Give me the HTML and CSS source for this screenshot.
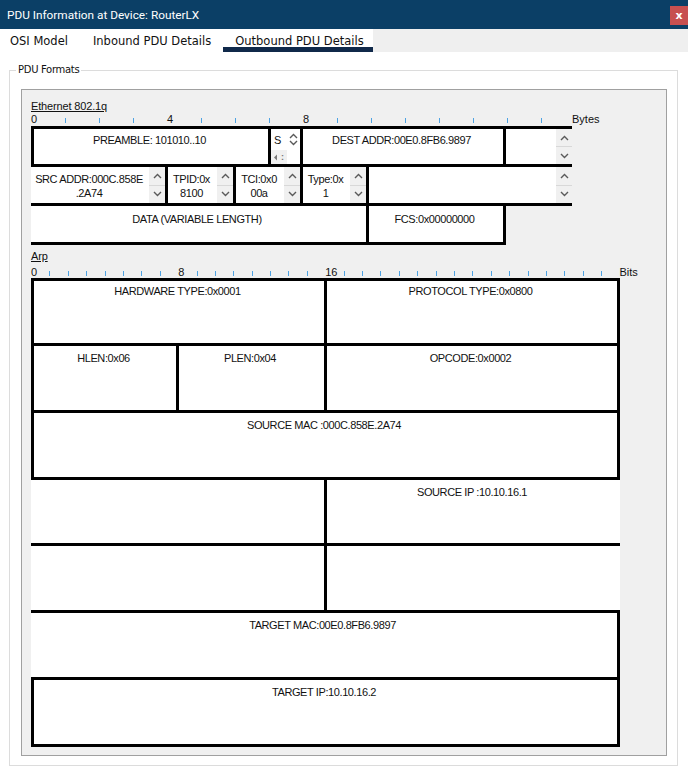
FILE: index.html
```html
<!DOCTYPE html>
<html lang="en">
<head>
    <meta charset="UTF-8">
    <title>PDU Information at Device: RouterLX</title>
    <link rel="stylesheet" href="styles.css">
</head>
<body>
<div class="window">
    <div class="titlebar">
        <span class="title">PDU Information at Device: RouterLX</span>
        <span class="close">x</span>
    </div>
    <div class="tabbar">
        <div class="tabs">
            <span class="tab first">OSI Model</span>
            <span class="tab">Inbound PDU Details</span>
            <span class="tab active">Outbound PDU Details</span>
        </div>
    </div>

    <fieldset class="group">
        <legend>PDU Formats</legend>
        <div class="panel">
            <!-- Ethernet 802.1q frame, 16 bytes per row -->
            <div class="proto-label">Ethernet 802.1q</div>
            <div class="ruler bytes">
                <span class="mk">0</span><span class="mk"><i></i></span><span class="mk"><i></i></span><span class="mk"><i></i></span>
                <span class="mk">4</span><span class="mk"><i></i></span><span class="mk"><i></i></span><span class="mk"><i></i></span>
                <span class="mk">8</span><span class="mk"><i></i></span><span class="mk"><i></i></span><span class="mk"><i></i></span>
                <span class="mk"><i></i></span><span class="mk"><i></i></span><span class="mk"><i></i></span><span class="mk"><i></i></span>
                <span class="unit">Bytes</span>
            </div>
            <div class="eth">
                <div class="eth-row r1">
                    <div class="cell w-pre"><div class="txt">PREAMBLE: 101010..10</div></div>
                    <div class="cell w-sfd">
                        <div class="sfd-top">
                            <span class="sfd-txt">S</span>
                            <span class="mini-spin">
                                <svg width="9" height="6" viewBox="0 0 9 6"><path d="M1 5 L4.5 1.5 L8 5" /></svg>
                                <svg width="9" height="6" viewBox="0 0 9 6"><path d="M1 1 L4.5 4.5 L8 1" /></svg>
                            </span>
                        </div>
                        <div class="hscroll"><svg width="5" height="7" viewBox="0 0 5 7"><path d="M4 0.5 L1 3.5 L4 6.5 Z" /></svg><b>:</b></div>
                    </div>
                    <div class="cell w-dest"><div class="txt">DEST ADDR:00E0.8FB6.9897</div></div>
                    <div class="cell open">
                        <div class="txt"></div>
                        <div class="spin">
                            <span><svg width="9" height="6" viewBox="0 0 9 6"><path d="M1 5 L4.5 1.5 L8 5" /></svg></span>
                            <span><svg width="9" height="6" viewBox="0 0 9 6"><path d="M1 1 L4.5 4.5 L8 1" /></svg></span>
                        </div>
                    </div>
                </div>
                <div class="eth-row r2">
                    <div class="cell w-src">
                        <div class="txt">SRC ADDR:000C.858E<br>.2A74</div>
                        <div class="spin">
                            <span><svg width="9" height="6" viewBox="0 0 9 6"><path d="M1 5 L4.5 1.5 L8 5" /></svg></span>
                            <span><svg width="9" height="6" viewBox="0 0 9 6"><path d="M1 1 L4.5 4.5 L8 1" /></svg></span>
                        </div>
                    </div>
                    <div class="cell w-tpid">
                        <div class="txt">TPID:0x<br>8100</div>
                        <div class="spin">
                            <span><svg width="9" height="6" viewBox="0 0 9 6"><path d="M1 5 L4.5 1.5 L8 5" /></svg></span>
                            <span><svg width="9" height="6" viewBox="0 0 9 6"><path d="M1 1 L4.5 4.5 L8 1" /></svg></span>
                        </div>
                    </div>
                    <div class="cell w-tci">
                        <div class="txt">TCI:0x0<br>00a</div>
                        <div class="spin">
                            <span><svg width="9" height="6" viewBox="0 0 9 6"><path d="M1 5 L4.5 1.5 L8 5" /></svg></span>
                            <span><svg width="9" height="6" viewBox="0 0 9 6"><path d="M1 1 L4.5 4.5 L8 1" /></svg></span>
                        </div>
                    </div>
                    <div class="cell w-type">
                        <div class="txt">Type:0x<br>1</div>
                        <div class="spin">
                            <span><svg width="9" height="6" viewBox="0 0 9 6"><path d="M1 5 L4.5 1.5 L8 5" /></svg></span>
                            <span><svg width="9" height="6" viewBox="0 0 9 6"><path d="M1 1 L4.5 4.5 L8 1" /></svg></span>
                        </div>
                    </div>
                    <div class="cell open">
                        <div class="txt"></div>
                        <div class="spin">
                            <span><svg width="9" height="6" viewBox="0 0 9 6"><path d="M1 5 L4.5 1.5 L8 5" /></svg></span>
                            <span><svg width="9" height="6" viewBox="0 0 9 6"><path d="M1 1 L4.5 4.5 L8 1" /></svg></span>
                        </div>
                    </div>
                </div>
                <div class="eth-row r3">
                    <div class="cell w-data"><div class="txt">DATA (VARIABLE LENGTH)</div></div>
                    <div class="cell w-fcs"><div class="txt">FCS:0x00000000</div></div>
                </div>
            </div>

            <!-- ARP packet, 32 bits per row -->
            <div class="proto-label arp-label">Arp</div>
            <div class="ruler bits">
                <span class="mk">0</span><span class="mk"><i></i></span><span class="mk"><i></i></span><span class="mk"><i></i></span><span class="mk"><i></i></span><span class="mk"><i></i></span><span class="mk"><i></i></span><span class="mk"><i></i></span>
                <span class="mk">8</span><span class="mk"><i></i></span><span class="mk"><i></i></span><span class="mk"><i></i></span><span class="mk"><i></i></span><span class="mk"><i></i></span><span class="mk"><i></i></span><span class="mk"><i></i></span>
                <span class="mk">16</span><span class="mk"><i></i></span><span class="mk"><i></i></span><span class="mk"><i></i></span><span class="mk"><i></i></span><span class="mk"><i></i></span><span class="mk"><i></i></span><span class="mk"><i></i></span>
                <span class="mk"><i></i></span><span class="mk"><i></i></span><span class="mk"><i></i></span><span class="mk"><i></i></span><span class="mk"><i></i></span><span class="mk"><i></i></span><span class="mk"><i></i></span><span class="mk"><i></i></span>
                <span class="unit">Bits</span>
            </div>
            <div class="arp">
                <div class="arp-row a1 bl">
                    <div class="cell br w-half">HARDWARE TYPE:0x0001</div>
                    <div class="cell br grow">PROTOCOL TYPE:0x0800</div>
                </div>
                <div class="arp-row bl">
                    <div class="cell br w-hlen">HLEN:0x06</div>
                    <div class="cell br w-plen">PLEN:0x04</div>
                    <div class="cell br grow">OPCODE:0x0002</div>
                </div>
                <div class="arp-row bl">
                    <div class="cell br grow">SOURCE MAC :000C.858E.2A74</div>
                </div>
                <div class="arp-row a4">
                    <div class="cell br w-left"></div>
                    <div class="cell grow">SOURCE IP :10.10.16.1</div>
                </div>
                <div class="arp-row">
                    <div class="cell br w-left"></div>
                    <div class="cell grow"></div>
                </div>
                <div class="arp-row">
                    <div class="cell br grow">TARGET MAC:00E0.8FB6.9897</div>
                </div>
                <div class="arp-row bl">
                    <div class="cell br grow">TARGET IP:10.10.16.2</div>
                </div>
            </div>
        </div>
    </fieldset>
</div>
</body>
</html>
```

FILE: styles.css
```css
body {
    margin: 0;
    background: #fff;
    font-family: "Liberation Sans", Arial, sans-serif;
    color: #111;
}
.window {
    width: 688px;
    height: 776px;
    overflow: hidden;
}

/* title bar */
.titlebar {
    height: 29px;
    background: #0b3f66;
    color: #fff;
    display: flex;
    align-items: center;
    padding-left: 7px;
    font: 11.8px Roboto, sans-serif;
}
.titlebar .close {
    margin-left: auto;
    align-self: flex-start;
    margin-top: 6px;
    width: 18px;
    height: 19px;
    background: #c75050;
    color: #fff;
    font: bold 11px "DejaVu Sans", sans-serif;
    display: flex;
    align-items: center;
    justify-content: center;
}

/* tabs */
.tabbar {
    height: 23px;
    background: #efefef;
}
.tabs {
    width: 373px;
    height: 23px;
    background: #fff;
    display: flex;
}
.tab {
    box-sizing: border-box;
    height: 23px;
    padding: 5px 12px 0;
    font: 11.5px/14px "DejaVu Sans", sans-serif;
    color: #111;
    white-space: nowrap;
}
.tab.first {
    padding-left: 10px;
    padding-right: 13px;
}
.tab.active {
    flex: 1;
    padding-right: 0;
    border-bottom: 5px solid #10294a;
}

/* group box */
.group {
    margin: 12px 10px 0 9px;
    padding: 13px 10px 9px 11px;
    border: 1px solid #dcdcdc;
    min-width: 0;
}
.group legend {
    margin-left: -5px;
    padding: 0 2px;
    font: 10px/12px "DejaVu Sans", sans-serif;
    letter-spacing: -0.3px;
    color: #111;
}
.panel {
    box-sizing: border-box;
    height: 667px;
    background: #f0f0f0;
    border: 1px solid #a0a0a0;
    padding: 10px 0 0 9px;
}

.proto-label {
    font-size: 11px;
    line-height: 13px;
    letter-spacing: -0.15px;
    text-decoration: underline;
}
.arp-label {
    margin-top: 5px;
}

/* rulers */
.ruler {
    display: flex;
    height: 13px;
    font-size: 11px;
    line-height: 12px;
}
.ruler .mk {
    flex: none;
    width: 34px;
}
.ruler .mk i {
    display: block;
    width: 1px;
    height: 5px;
    margin-top: 5px;
    background: #4fa3e3;
}
.ruler.bytes .unit {
    margin-left: -3px;
}
.ruler.bits {
    height: 12px;
    margin-top: 3px;
}
.ruler.bits .mk {
    width: 18.4px;
}

/* ethernet table */
.eth-row {
    box-sizing: border-box;
    display: flex;
    background: #fff;
    border-bottom: 3px solid #000;
    width: 541px;
}
.eth-row.r1 {
    height: 41px;
    border-top: 3px solid #000;
    border-left: 3px solid #000;
}
.eth-row.r2 {
    height: 39px;
}
.eth-row.r3 {
    height: 39px;
    width: 475px;
}
.eth .cell {
    box-sizing: border-box;
    flex: none;
    display: flex;
    border-right: 3px solid #000;
}
.eth .cell.open {
    flex: 1;
    border-right: none;
}
.eth .txt {
    flex: 1;
    text-align: center;
    padding: 4px 3px 0 0;
    font-size: 11px;
    line-height: 14px;
    letter-spacing: -0.4px;
    white-space: nowrap;
}
.eth-row.r2 .txt {
    padding-top: 5px;
    padding-right: 2px;
}
.eth-row.r3 .txt {
    padding-top: 6px;
}
.w-pre { width: 237px; }
.w-sfd { width: 32px; flex-direction: column; }
.w-dest { width: 203px; }
.w-src { width: 137px; }
.w-tpid { width: 68px; }
.w-tci { width: 67px; }
.w-type { width: 66px; }
.w-data { width: 338px; }
.w-fcs { width: 137px; }

.spin {
    width: 16px;
    display: flex;
    flex-direction: column;
    background: #f0f0f0;
}
.spin span {
    flex: 1;
    display: flex;
    align-items: center;
    justify-content: center;
}
.spin span + span {
    border-top: 1px solid #d8d8d8;
}
.spin path,
.mini-spin path {
    fill: none;
    stroke: #5a5a5a;
    stroke-width: 1.4;
}

/* narrow SFD field with its own scrollbars */
.sfd-top {
    flex: 1;
    display: flex;
}
.sfd-txt {
    flex: 1;
    padding: 4px 0 0 3px;
    font-size: 11px;
    line-height: 14px;
}
.mini-spin {
    width: 14px;
    display: flex;
    flex-direction: column;
    align-items: center;
    padding-top: 4px;
    gap: 1px;
}
.hscroll {
    height: 14px;
    width: 14px;
    background: #f0f0f0;
    display: flex;
    align-items: center;
    gap: 3px;
    padding-left: 2px;
    font-size: 9px;
    color: #777;
}
.hscroll path {
    fill: #777;
}

/* arp table */
.arp-row {
    box-sizing: border-box;
    display: flex;
    width: 589px;
    height: 67px;
    background: #fff;
    border-bottom: 3px solid #000;
}
.arp-row.a1 {
    height: 68px;
    border-top: 3px solid #000;
}
.arp-row.a4 {
    height: 66px;
}
.arp-row.bl {
    border-left: 3px solid #000;
}
.arp .cell {
    box-sizing: border-box;
    flex: none;
    text-align: center;
    padding: 5px 3px 0 0;
    font-size: 11px;
    line-height: 14px;
    letter-spacing: -0.4px;
}
.arp-row.a1 .cell {
    padding-top: 3px;
}
.arp .cell.br {
    border-right: 3px solid #000;
}
.arp .cell.grow {
    flex: 1;
}
.w-half { width: 293px; }
.w-hlen { width: 145px; }
.w-plen { width: 148px; }
.w-left { width: 296px; }
```
